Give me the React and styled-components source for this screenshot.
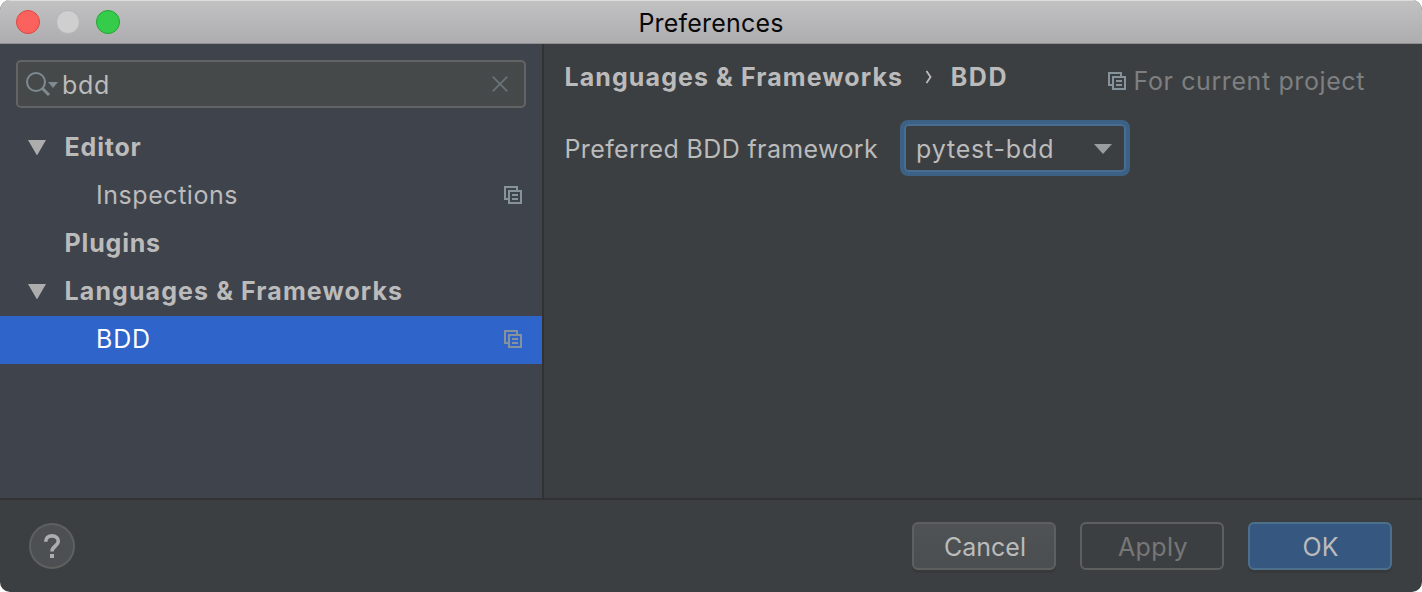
import React from 'react';
import styled, { createGlobalStyle, css } from 'styled-components';

const GlobalStyle = createGlobalStyle`
  *, *::before, *::after { box-sizing: border-box; }
  body { margin: 0; background: #fff; }
`;

const Window = styled.div`
  width: 1422px;
  height: 592px;
  display: flex;
  flex-direction: column;
  overflow: hidden;
  border-radius: 10px;
  background: #3c3f41;
  color: #bbbbbb;
  font: 400 25px/30px Inter, 'Liberation Sans', sans-serif;
`;

const TitleBar = styled.header`
  height: 44px;
  flex: none;
  display: grid;
  grid-template-columns: 1fr auto 1fr;
  align-items: center;
  padding: 0 16px;
  background: linear-gradient(#c3c2c3, #adacae);
  border-bottom: 1px solid #8f8e90;
  box-shadow: inset 0 1px 0 #dddcdd;
`;

const Lights = styled.div`
  display: flex;
  gap: 16px;
`;

const Light = styled.span`
  width: 24px;
  height: 24px;
  border-radius: 50%;
  background: ${(p) => p.$fill};
  border: 1px solid ${(p) => p.$edge};
`;

const Title = styled.h1`
  margin: 0;
  padding-top: 2px;
  font: inherit;
  color: #080808;
`;

const Label = styled.span`
  white-space: nowrap;
  letter-spacing: ${(p) => p.$track || 0}px;
`;

const Body = styled.div`
  flex: 1;
  display: flex;
  border-bottom: 2px solid #323232;
`;

const Sidebar = styled.aside`
  width: 544px;
  flex: none;
  padding-top: 16px;
  background: #3f434c;
  border-right: 2px solid #323232;
`;

const SearchField = styled.div`
  height: 48px;
  margin: 0 16px 16px;
  padding: 0 14px 0 8px;
  display: flex;
  align-items: center;
  background: #45494a;
  border: 2px solid #646464;
  border-radius: 5px;
`;

const Query = styled(Label)`
  flex: 1;
  margin-left: 3px;
  padding-top: 2px;
`;

const Row = styled.div`
  height: 48px;
  display: flex;
  align-items: center;
  padding: 0 20px 2px ${(p) => (p.$nested ? 96 : 28)}px;
  font-weight: ${(p) => (p.$nested ? 400 : 700)};
  ${(p) => p.$selected && css`
    background: #2f65ca;
    color: #fff;
  `}
`;

const Twisty = styled.span`
  width: 36.6px;
  height: 15px;
  display: flex;
`;

const RowLabel = styled(Label)`
  flex: 1;
`;

const Content = styled.main`
  flex: 1;
  padding: 18px 57px 0 20.5px;
`;

const PageHeader = styled.div`
  display: flex;
  align-items: flex-start;
  height: 58px;
`;

const Breadcrumb = styled.div`
  flex: 1;
  display: flex;
  align-items: center;
  font-weight: 700;
`;

const Separator = styled.svg`
  margin: 0 17.5px 0 22px;
`;

const Scope = styled.div`
  display: flex;
  align-items: center;
  gap: 7.5px;
  padding-top: 4px;
  color: #7e7f80;
`;

const Field = styled.div`
  display: flex;
  align-items: center;
`;

const FieldLabel = styled(Label)`
  width: 335.5px;
  padding-top: 2px;
`;

const Select = styled.div`
  width: 230px;
  height: 56px;
  padding: 2px 14px 0 12px;
  display: flex;
  align-items: center;
  justify-content: space-between;
  border: 4px solid #3d6185;
  border-radius: 8px;
  box-shadow: inset 0 0 0 2px #466d94;
`;

const Footer = styled.footer`
  height: 92px;
  flex: none;
  display: flex;
  align-items: center;
  gap: 24px;
  padding: 0 30px 0 29px;
`;

const HelpButton = styled.button`
  width: 46px;
  height: 46px;
  margin-right: auto;
  padding: 0;
  display: grid;
  place-items: center;
  border: 2px solid #5e6060;
  border-radius: 50%;
  background: #4c5052;
`;

const variants = {
  normal: css`
    background: linear-gradient(#4f5355, #4a4e50);
    border-color: #5e6060;
    box-shadow: 0 3px 0 #37393b;
  `,
  disabled: css`
    background: transparent;
    border-color: #5e6060;
    color: #777777;
  `,
  primary: css`
    background: #365880;
    border-color: #4c708c;
    box-shadow: 0 3px 0 #37393b;
  `,
};

const Button = styled.button`
  width: 144px;
  height: 48px;
  padding: 2px 0 0 ${(p) => (p.$variant === 'primary' ? 1 : 2)}px;
  border: 2px solid;
  border-radius: 6px;
  font: inherit;
  color: #bbbbbb;
  ${(p) => variants[p.$variant]}
`;

const ProjectIcon = () => (
  <svg width="18" height="18" viewBox="0 0 18 18" fill="none" stroke="#87939a" strokeWidth="2">
    <path d="M13 4V1H1v12h3M5 5h12v12H5zM8 9h6M8 13h6" />
  </svg>
);

const Expander = () => (
  <svg width="18" height="15" viewBox="0 0 18 15">
    <path d="M0 0h18L9 15.5z" fill="#adadad" />
  </svg>
);

const SearchIcon = () => (
  <svg width="33" height="24" viewBox="0 0 33 24">
    <g fill="none" stroke="#7f8b91">
      <circle cx="10" cy="10" r="9" strokeWidth="2" />
      <path d="M16 16l7 7" strokeWidth="3" />
    </g>
    <path d="M22 10h10l-5 6z" fill="#7f8b91" />
  </svg>
);

const tree = [
  { label: 'Editor', open: true, track: 0.8 },
  { label: 'Inspections', nested: true, project: true, track: 0.55 },
  { label: 'Plugins', track: 0.8 },
  { label: 'Languages & Frameworks', open: true, track: 1.09 },
  { label: 'BDD', nested: true, project: true, selected: true, track: 0.8 },
];

export default function App() {
  return (
    <>
      <GlobalStyle />
      <Window>
        <TitleBar>
          <Lights>
            <Light $fill="#fc625d" $edge="#de4642" />
            <Light $fill="#d0cfd0" $edge="#b6b5b7" />
            <Light $fill="#35cb4b" $edge="#23a532" />
          </Lights>
          <Title><Label $track={0.2}>Preferences</Label></Title>
        </TitleBar>
        <Body>
          <Sidebar>
            <SearchField>
              <SearchIcon />
              <Query $track={0.7}>bdd</Query>
              <svg width="20" height="20" viewBox="0 0 20 20">
                <path d="M2.7 2.7l14.6 14.6M17.3 2.7L2.7 17.3" stroke="#697377" strokeWidth="1.8" />
              </svg>
            </SearchField>
            {tree.map((item) => (
              <Row key={item.label} $nested={item.nested} $selected={item.selected}>
                {!item.nested && <Twisty>{item.open && <Expander />}</Twisty>}
                <RowLabel $track={item.track}>{item.label}</RowLabel>
                {item.project && <ProjectIcon />}
              </Row>
            ))}
          </Sidebar>
          <Content>
            <PageHeader>
              <Breadcrumb>
                <Label $track={1.09}>Languages &amp; Frameworks</Label>
                <Separator width="8" height="14" viewBox="0 0 8 14">
                  <path d="M1.5 1L5.5 7L1.5 13" fill="none" stroke="#bbbbbb" strokeWidth="1.8" />
                </Separator>
                <Label $track={1.6}>BDD</Label>
              </Breadcrumb>
              <Scope>
                <ProjectIcon />
                <Label $track={0.6}>For current project</Label>
              </Scope>
            </PageHeader>
            <Field>
              <FieldLabel $track={0.37}>Preferred BDD framework</FieldLabel>
              <Select>
                <Label $track={0.82}>pytest-bdd</Label>
                <svg width="18" height="10" viewBox="0 0 18 10">
                  <path d="M0 0h18L9 10z" fill="#9a9da0" />
                </svg>
              </Select>
            </Field>
          </Content>
        </Body>
        <Footer>
          <HelpButton aria-label="Help">
            <svg width="18" height="26" viewBox="0 0 18 26">
              <path d="M2.7 8.7C2.7 5 5.3 2.9 9 2.9s6.3 2 6.3 5.3c0 4.8-6.3 4.9-6.3 10.3" fill="none" stroke="#adadad" strokeWidth="3.6" />
              <path d="M7 21h4v4H7z" fill="#adadad" />
            </svg>
          </HelpButton>
          <Button $variant="normal"><Label $track={0}>Cancel</Label></Button>
          <Button $variant="disabled"><Label $track={0.4}>Apply</Label></Button>
          <Button $variant="primary"><Label $track={0}>OK</Label></Button>
        </Footer>
      </Window>
    </>
  );
}
